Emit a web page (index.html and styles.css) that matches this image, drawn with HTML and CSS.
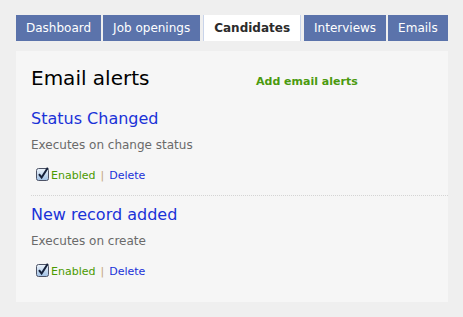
FILE: index.html
```html
<!DOCTYPE html>
<html>
<head>
<meta charset="utf-8">
<link rel="stylesheet" href="styles.css">
</head>
<body>
<div class="page">
  <ul class="tabs">
    <li class="tab">Dashboard</li>
    <li class="tab">Job openings</li>
    <li class="tab active">Candidates</li>
    <li class="tab">Interviews</li>
    <li class="tab">Emails</li>
  </ul>
  <div class="panel">
    <div class="header">
      <h1 class="title">Email alerts</h1>
      <a class="add-link">Add email alerts</a>
    </div>
    <div class="record">
      <h2 class="record-name">Status Changed</h2>
      <p class="record-desc">Executes on change status</p>
      <div class="actions">
        <svg class="check" width="13" height="14" viewBox="0 0 13 14">
          <defs>
            <linearGradient id="cb1" x1="0" y1="0" x2="0" y2="1">
              <stop offset="0" stop-color="#eef4fb"/>
              <stop offset="1" stop-color="#9fc0e4"/>
            </linearGradient>
          </defs>
          <rect x="0.5" y="1.5" width="12" height="12" rx="2" fill="url(#cb1)" stroke="#4d5366"/>
          <path d="M3 7.2 L5.6 10.6 L11.8 0.8" fill="none" stroke="#15203a" stroke-width="2"/>
        </svg>
        <span class="enabled">Enabled</span>
        <span class="sep">|</span>
        <a class="delete">Delete</a>
      </div>
    </div>
    <div class="record last">
      <h2 class="record-name">New record added</h2>
      <p class="record-desc">Executes on create</p>
      <div class="actions">
        <svg class="check" width="13" height="14" viewBox="0 0 13 14">
          <defs>
            <linearGradient id="cb2" x1="0" y1="0" x2="0" y2="1">
              <stop offset="0" stop-color="#eef4fb"/>
              <stop offset="1" stop-color="#9fc0e4"/>
            </linearGradient>
          </defs>
          <rect x="0.5" y="1.5" width="12" height="12" rx="2" fill="url(#cb2)" stroke="#4d5366"/>
          <path d="M3 7.2 L5.6 10.6 L11.8 0.8" fill="none" stroke="#15203a" stroke-width="2"/>
        </svg>
        <span class="enabled">Enabled</span>
        <span class="sep">|</span>
        <a class="delete">Delete</a>
      </div>
    </div>
  </div>
</div>
</body>
</html>
```
FILE: styles.css
```css
html, body {
  margin: 0;
  padding: 0;
  background: #efefef;
}
body {
  font-family: "DejaVu Sans", Verdana, sans-serif;
}
.page {
  padding: 15px 15px 0 16px;
  width: 432px;
}
.tabs {
  display: flex;
  gap: 2px;
  list-style: none;
  margin: 0;
  padding: 0;
}
.tab {
  height: 26px;
  line-height: 26px;
  padding: 0 10px;
  background: #5b73ab;
  color: #ffffff;
  font-size: 12px;
}
.tab.active {
  background: #ffffff;
  color: #2b2b2b;
  font-weight: bold;
  border-left: 1px solid #c9d4ea;
  border-right: 1px solid #c9d4ea;
  margin: 0 1px 0 1px;
}
.panel {
  margin-top: 10px;
  background: #f6f6f6;
  padding: 15px 0 11px 15px;
}
.header {
  display: flex;
  align-items: baseline;
  margin-bottom: 10px;
}
.title {
  flex: 0 0 225px;
  margin: 0;
  font-size: 20px;
  line-height: 24px;
  font-weight: normal;
  color: #000;
}
.add-link {
  font-size: 11px;
  font-weight: bold;
  color: #4a9a0e;
}
.record {
  padding: 9px 0 11px 0;
  border-bottom: 1px dotted #d4d4d4;
}
.record.last {
  border-bottom: none;
}
.record-name {
  margin: 0;
  font-size: 16px;
  line-height: 20px;
  font-weight: normal;
  color: #1a32d8;
}
.record-desc {
  margin: 8px 0 0 0;
  font-size: 12px;
  line-height: 16px;
  color: #6a6a6a;
}
.actions {
  display: flex;
  align-items: flex-start;
  margin-top: 15px;
  padding-left: 5px;
  font-size: 11px;
  line-height: 16px;
}
.check {
  margin: -1px 2px 0 0;
  flex: 0 0 auto;
}
.enabled {
  color: #4b9a00;
}
.sep {
  margin: 0 5px;
  color: #c4a67c;
}
.delete {
  color: #1a32d8;
}
```
